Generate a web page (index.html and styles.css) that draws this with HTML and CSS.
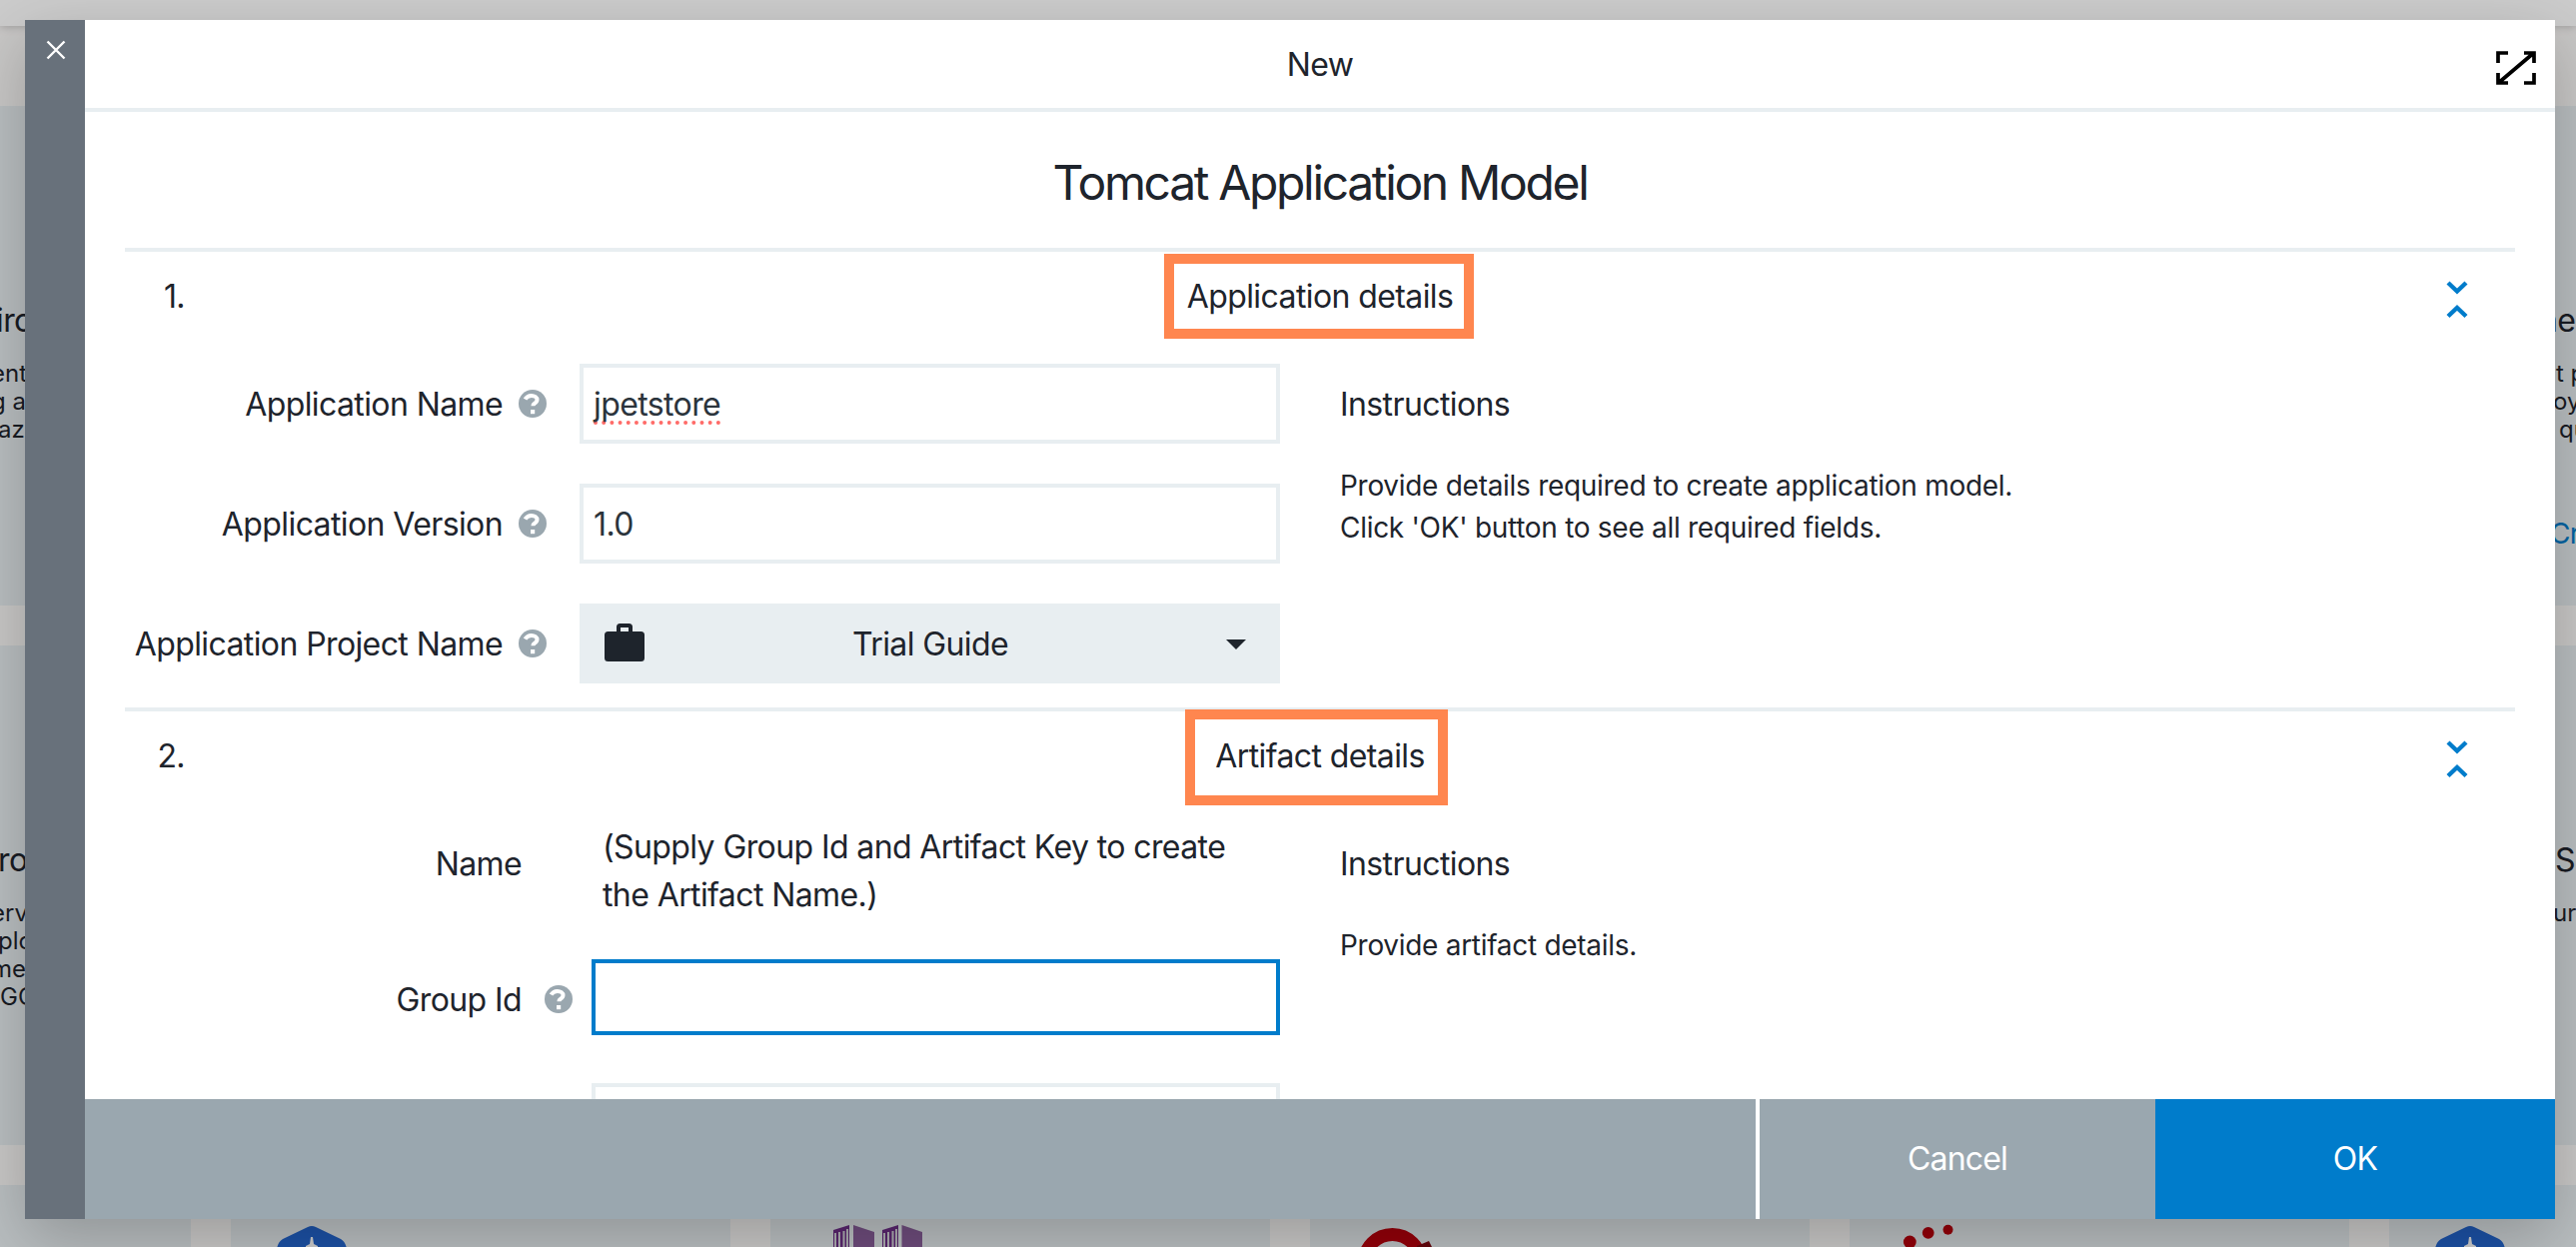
FILE: index.html
```html
<!DOCTYPE html>
<html lang="en">
<head>
<meta charset="utf-8">
<title>New - Tomcat Application Model</title>
<link rel="stylesheet" href="styles.css">
</head>
<body>
<svg class="defs" width="0" height="0">
  <symbol id="help" viewBox="0 0 28 28">
    <circle cx="14" cy="14" r="14" fill="#9aa7af"/>
    <path d="M8 9.6C9.6 6.8 11.500 5.900 14.300 5.900C17.500 5.900 20 7.700 20 10.100C20 12.300 18.600 13.100 17.200 14C16.200 14.700 15.900 15.200 15.900 16.300" transform="translate(-1.500 0)" fill="none" stroke="#fff" stroke-width="4"/>
    <rect x="12" y="20" width="4.200" height="4.200" fill="#fff"/>
  </symbol>
  <symbol id="collapse" viewBox="0 0 24 40">
    <path d="M3 3L12 11.500L21 3M3 36.500L12 28L21 36.500" fill="none" stroke="#007ccb" stroke-width="4.400"/>
  </symbol>
  <symbol id="wheel" viewBox="0 0 500 62">
    <path d="M77 42Q81 40 85 42L110 54Q115 57 116 64H46Q47 57 52 54Z" fill="#2466cf"/>
    <path d="M80 52H82L83 59L87 61V64H75V61L79 59Z" fill="#fff"/>
  </symbol>
</svg>

<div class="page">
  <div class="topbar"></div>
  <div class="cards">
    <div class="card">
      <h3 class="name shift-a">iro</h3>
      <p class="text"><span class="shift-b">ent</span><br><span class="shift-b">g a</span><br><span class="shift-c">azo</span></p>
    </div>
    <div class="card"></div><div class="card"></div><div class="card"></div><div class="card"></div>
    <div class="card">
      <h3 class="name">ne</h3>
      <p class="text"><span class="shift-d">t p</span><br>oy<br><span class="shift-e">qu</span></p>
      <a class="create">Create</a>
    </div>
    <div class="card">
      <h3 class="name shift-c">ros</h3>
      <p class="text"><span class="shift-b">ervi</span><br><span class="shift-c">ploy</span><br><span class="shift-b">men</span><br>GC</p>
    </div>
    <div class="card"></div><div class="card"></div><div class="card"></div><div class="card"></div>
    <div class="card">
      <h3 class="name shift-f">S</h3>
      <p class="text">ur</p>
    </div>
    <div class="card"></div>
    <div class="card"><svg class="logo"><use href="#wheel"/></svg></div>
    <div class="card">
      <svg class="logo" viewBox="0 0 500 62">
        <path d="M63 45L79 40V62H63Z" fill="#70308a"/>
        <path d="M65 48V62M69 47V62M73.500 46V62M77 44V62" stroke="#d8d8dc" stroke-width="2"/>
        <path d="M83 40L104 47V62H83Z" fill="#8a5f9b"/>
        <path d="M112 45L128 40V62H112Z" fill="#70308a"/>
        <path d="M114 48V62M118 47V62M122.500 46V62M126 44V62" stroke="#d8d8dc" stroke-width="2"/>
        <path d="M131.500 40L152 47V62H131.500Z" fill="#8a5f9b"/>
      </svg>
    </div>
    <div class="card">
      <svg class="logo" viewBox="0 0 500 62">
        <circle cx="82.500" cy="78" r="28.500" fill="none" stroke="#b8000c" stroke-width="13"/>
        <path d="M107 61L119 56L122 62V66H107Z" fill="#7d0810"/>
      </svg>
    </div>
    <div class="card">
      <svg class="logo" viewBox="0 0 500 62">
        <g fill="#b8000c"><circle cx="60.300" cy="57" r="6.400"/><circle cx="78.700" cy="47.800" r="5.900"/><circle cx="98.500" cy="44.800" r="5"/></g>
      </svg>
    </div>
    <div class="card"><svg class="logo"><use href="#wheel"/></svg></div>
  </div>
</div>

<div class="overlay">
  <div class="modal">
    <div class="rail">
      <svg class="close" viewBox="0 0 20 20"><path d="M1.500 1.500L18.500 18.500M18.500 1.500L1.500 18.500" stroke="#fff" stroke-width="2.400"/></svg>
    </div>
    <div class="main">
      <header class="header">
        <span>New</span>
        <svg class="expand" viewBox="0 0 40 34">
          <path d="M2 12V2H12M28 2H38V12M38 22V32H28M12 32H2V22M3.500 31L36.500 3" fill="none" stroke="#000" stroke-width="3.700"/>
        </svg>
      </header>
      <div class="content">
        <h1 class="title">Tomcat Application Model</h1>

        <section class="section">
          <div class="section-head">
            <span class="number">1.</span><h2 class="heading">Application details</h2>
            <svg class="toggle"><use href="#collapse"/></svg>
          </div>
          <div class="marker marker-app"></div>
          <div class="section-body">
            <div class="fields">
              <div class="row">
                <label class="label">Application Name</label><svg class="help"><use href="#help"/></svg>
                <div class="input"><span class="misspelled">jpetstore</span></div>
              </div>
              <div class="row">
                <label class="label">Application Version</label><svg class="help"><use href="#help"/></svg>
                <div class="input">1.0</div>
              </div>
              <div class="row">
                <label class="label">Application Project Name</label><svg class="help"><use href="#help"/></svg>
                <div class="select">
                  <svg class="case" viewBox="0 0 40 38"><path fill="#1e242c" fill-rule="evenodd" d="M12 8V3.500Q12 0 15.500 0H24.500Q28 0 28 3.500V8H36.500Q40 8 40 11.500V34.500Q40 38 36.500 38H3.500Q0 38 0 34.500V11.500Q0 8 3.500 8ZM16 4V8H24V4Z"/></svg>
                  <span>Trial Guide</span>
                  <svg class="caret" viewBox="0 0 20 10"><path d="M0 0H20L10 10Z" fill="#1e242c"/></svg>
                </div>
              </div>
            </div>
            <div class="instructions">
              <h3 class="instructions-head">Instructions</h3>
              <p class="instructions-text">Provide details required to create application model.<br>Click 'OK' button to see all required fields.</p>
            </div>
          </div>
        </section>

        <section class="section">
          <div class="section-head">
            <span class="number">2.</span><h2 class="heading">Artifact details</h2>
            <svg class="toggle"><use href="#collapse"/></svg>
          </div>
          <div class="marker marker-artifact"></div>
          <div class="section-body">
            <div class="fields artifact">
              <div class="row row-name">
                <label class="label">Name</label>
                <p class="hint">(Supply Group Id and Artifact Key to create<br>the Artifact Name.)</p>
              </div>
              <div class="row">
                <label class="label">Group Id</label><svg class="help"><use href="#help"/></svg>
                <div class="input focused"></div>
              </div>
              <div class="row row-next"><div class="input"></div></div>
            </div>
            <div class="instructions">
              <h3 class="instructions-head">Instructions</h3>
              <p class="instructions-text">Provide artifact details.</p>
            </div>
          </div>
        </section>
      </div>
      <footer class="footer">
        <button class="button cancel">Cancel</button>
        <button class="button ok">OK</button>
      </footer>
    </div>
  </div>
</div>
</body>
</html>
```
FILE: styles.css
```css
* { box-sizing: border-box; }
body {
  margin: 0;
  width: 2578px;
  height: 1248px;
  overflow: hidden;
  position: relative;
  background: #fff;
  color: #1e242c;
  font: 400 32px/48px Inter, "Liberation Sans", sans-serif;
  letter-spacing: -.6px;
}
h1, h2, h3, p { margin: 0; font-weight: 400; }
.defs { position: absolute; }

.page { height: 1248px; overflow: hidden; background: #fbf9f8; }
.topbar { height: 26px; background: #fff; box-shadow: 0 0 10px rgba(0,0,0,.25); position: relative; }
.cards {
  display: grid;
  grid-template-columns: repeat(6, 500px);
  grid-auto-rows: 500px;
  gap: 40px;
  width: 3200px;
  margin: 80px 0 0 -309px;
}
.card { background: #e8eef1; padding: 190px 0 0 309px; overflow: hidden; white-space: nowrap; }
.card:nth-child(6n) { padding-left: 164px; }
.card:nth-child(n+13) { padding: 0; }
.name { font-size: 32px; line-height: 50px; }
.text { margin-top: 14px; font-size: 24px; line-height: 28px; letter-spacing: 0; }
.card:nth-child(6) .name { margin-left: -14px; }
.create { display: block; margin: 70px 0 0 -3px; font-size: 28px; line-height: 40px; color: #007ccb; }
.logo { display: block; width: 500px; height: 62px; }
.shift-a { margin-left: -4px; }
.shift-b { margin-left: -9px; }
.shift-c { margin-left: -2px; }
.shift-d { margin-left: 3px; }
.shift-e { margin-left: 6px; }
.shift-f { margin-left: 2px; }

.overlay { position: absolute; inset: 0; background: rgba(0,0,0,.2); padding: 20px 21px 28px 25px; }
.modal { display: flex; height: 1200px; box-shadow: 0 20px 60px rgba(0,0,0,.22); }
.rail { width: 60px; background: #68717b; padding: 20px 0 0 21px; }
.close { display: block; width: 20px; height: 20px; }
.main { flex: 1; display: flex; flex-direction: column; background: #fff; }
.header {
  position: relative;
  height: 92px;
  padding-top: 2px;
  border-bottom: 4px solid #e8eef1;
  display: flex;
  align-items: center;
  justify-content: center;
}
.expand { position: absolute; right: 19px; top: 31px; width: 40px; height: 34px; }
.content { flex: 1; min-height: 0; overflow: hidden; padding: 0 40px; }
.title { height: 136px; padding-top: 4px; line-height: 134px; font-size: 48px; text-align: center; letter-spacing: -2.35px; }

.section { position: relative; border-top: 4px solid #e8eef1; padding-bottom: 24px; }
.section-head { display: grid; grid-template-columns: 60px 1fr 60px; align-items: center; height: 88px; margin-bottom: 24px; }
.number { text-align: right; padding-top: 2px; }
.heading { font-size: 32px; text-align: center; padding-top: 2px; }
.toggle { width: 24px; height: 40px; margin: 8px 0 0 -10px; }
.marker { position: absolute; border: 10px solid #ff864f; }
.marker-app { left: 1040px; top: 2px; width: 310px; height: 85px; }
.marker-artifact { left: 1061px; top: -2px; width: 263px; height: 96px; }

.section-body { display: flex; gap: 61px; }
.fields { width: 1156px; display: flex; flex-direction: column; gap: 40px; }
.row { display: flex; align-items: center; height: 80px; }
.label { width: 378px; text-align: right; white-space: nowrap; padding-top: 2px; }
.help { width: 28px; height: 28px; margin: 0 33px 0 16px; }
.input { flex: 1; height: 80px; border: 4px solid #e8eef1; padding: 0 10px; line-height: 74px; color: #2b343c; }
.misspelled { text-decoration: underline dotted #ff6b68 4px; text-underline-offset: 5px; text-decoration-skip-ink: none; }
.select { flex: 1; height: 80px; background: #e8eef1; display: flex; align-items: center; justify-content: space-between; padding: 0 34px 0 25px; }
.select span { margin-right: 10px; padding-top: 2px; }
.case { width: 40px; height: 38px; margin-top: -2px; }
.caret { width: 20px; height: 10px; margin-top: 2px; }

.artifact .label { width: 397px; }
.artifact .help { margin: 0 19px 0 23px; }
.artifact .input { height: 76px; align-self: flex-start; }
.artifact .focused { border-color: #007ccb; }
.row-name { height: 96px; align-items: flex-start; }
.row-name .label { line-height: 80px; padding-top: 1px; }
.hint { width: 660px; margin-left: 81px; }
.row-next { margin-top: 4px; padding-left: 467px; }

.instructions-head { font-size: 32px; line-height: 82px; margin-left: -1px; }
.instructions-text { margin: 19px 0 0 -1px; font-size: 28px; line-height: 42px; letter-spacing: -.29px; }

.footer { height: 120px; background: #9aa7af; display: flex; justify-content: flex-end; }
.button { border: 0; padding: 0; font: inherit; letter-spacing: -.8px; color: #fff; width: 400px; height: 120px; background: #9aa7af; }
.cancel { border-left: 4px solid #fff; }
.ok { background: #007ccb; }
```
